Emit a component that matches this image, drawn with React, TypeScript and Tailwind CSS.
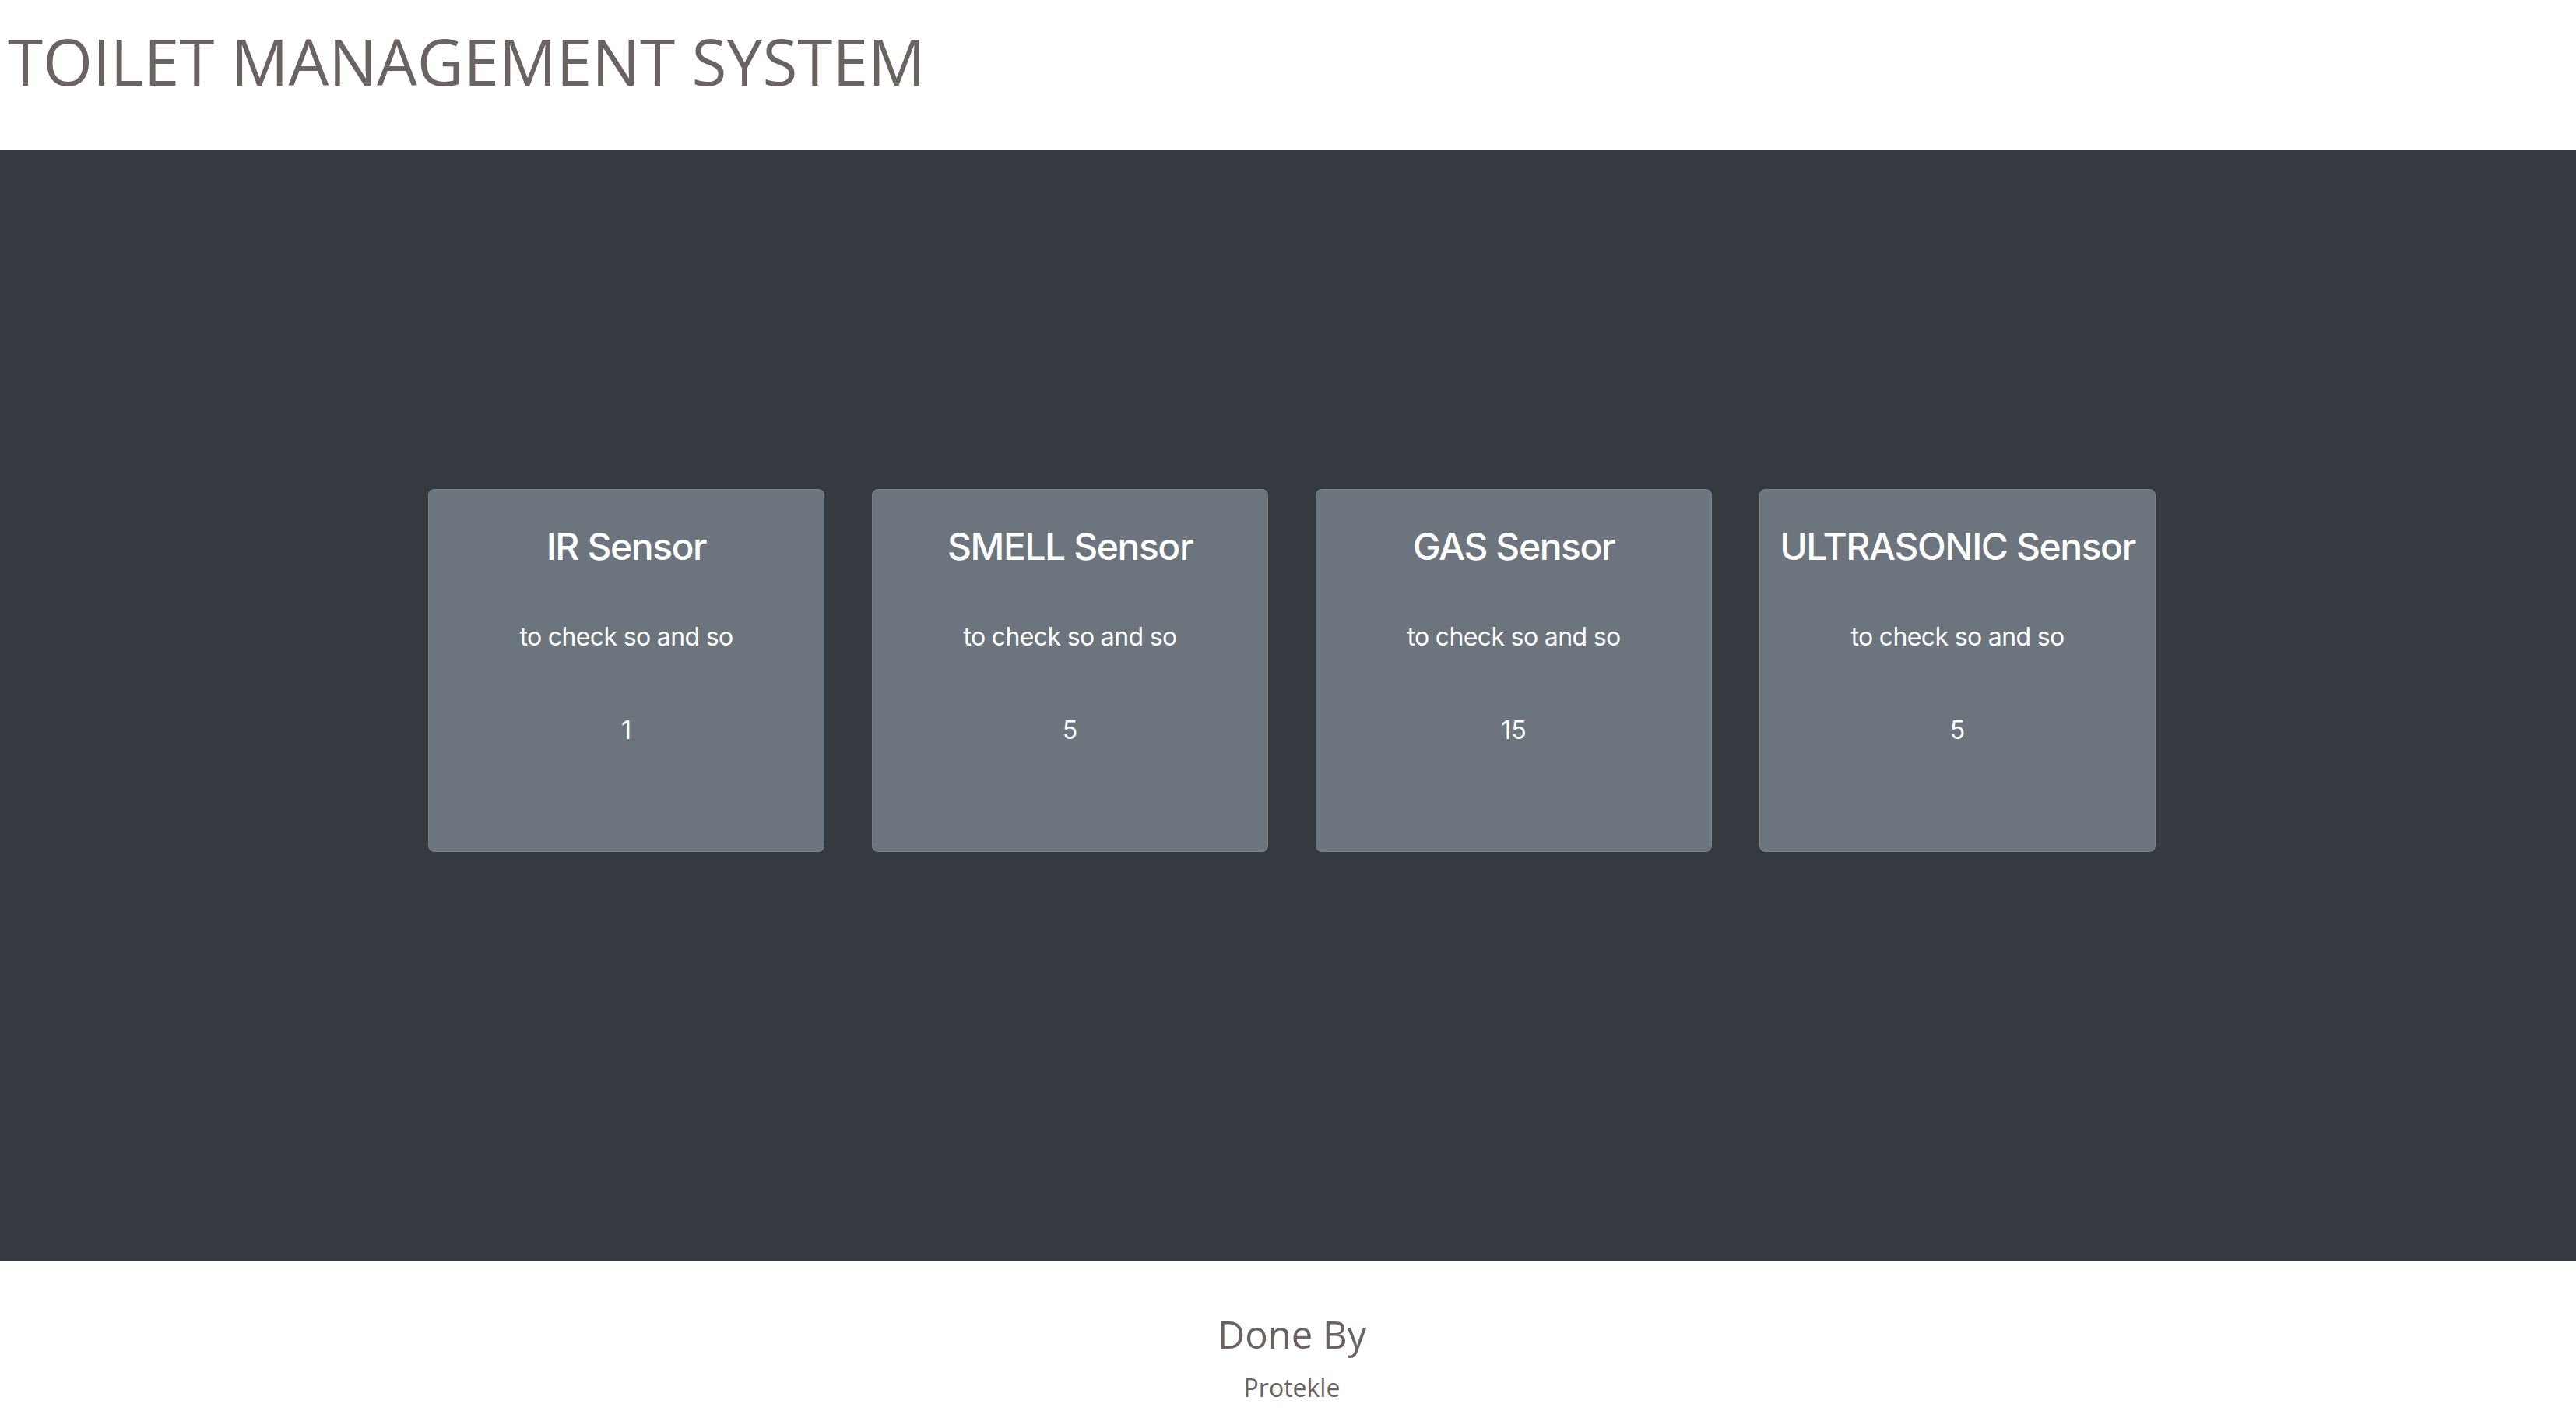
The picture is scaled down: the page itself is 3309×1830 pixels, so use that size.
import React from 'react';

const SENSORS = [
  { name: 'IR Sensor', desc: 'to check so and so', value: 1 },
  { name: 'SMELL Sensor', desc: 'to check so and so', value: 5 },
  { name: 'GAS Sensor', desc: 'to check so and so', value: 15 },
  { name: 'ULTRASONIC Sensor', desc: 'to check so and so', value: 5 },
];

const SensorCard: React.FC<{ name: string; desc: string; value: number }> = ({ name, desc, value }) => (
  <div className="w-[509px] h-[466px] shrink-0 rounded-[8px] border border-white/10 bg-[#6c757d] text-white text-center flex flex-col items-center pt-[44px]">
    <h3 className="text-[48px] leading-[58px] font-medium tracking-[-0.03em] whitespace-nowrap">{name}</h3>
    <p className="mt-[68px] text-[32px] leading-[38px] tracking-[-0.02em]">{desc}</p>
    <p className="mt-[82px] text-[32px] leading-[38px]">{value}</p>
  </div>
);

const App: React.FC = () => {
  return (
    <div className="min-h-screen bg-white" style={{ fontFamily: 'Inter, "Noto Sans", sans-serif' }}>
      <header className="h-[192px] pl-[10px] pt-[22px]">
        <h1 className="text-[82px] leading-[112px] text-[#6b6361]" style={{ fontFamily: '"Open Sans", "Noto Sans", sans-serif' }}>
          TOILET MANAGEMENT SYSTEM
        </h1>
      </header>

      <section className="h-[1428px] bg-[#343a40] pt-[436px]">
        <div className="flex justify-center gap-[61px] pl-[10px]">
          {SENSORS.map(s => (
            <SensorCard key={s.name} {...s} />
          ))}
        </div>
      </section>

      <footer className="h-[210px] pt-[60px] pl-[10px] flex flex-col items-center text-[#6b6361]" style={{ fontFamily: '"Open Sans", "Noto Sans", sans-serif' }}>
        <h2 className="text-[49px] leading-[66px]">Done By</h2>
        <p className="mt-[14px] text-[32px] leading-[43px]">Protekle</p>
      </footer>
    </div>
  );
};

export default App;
